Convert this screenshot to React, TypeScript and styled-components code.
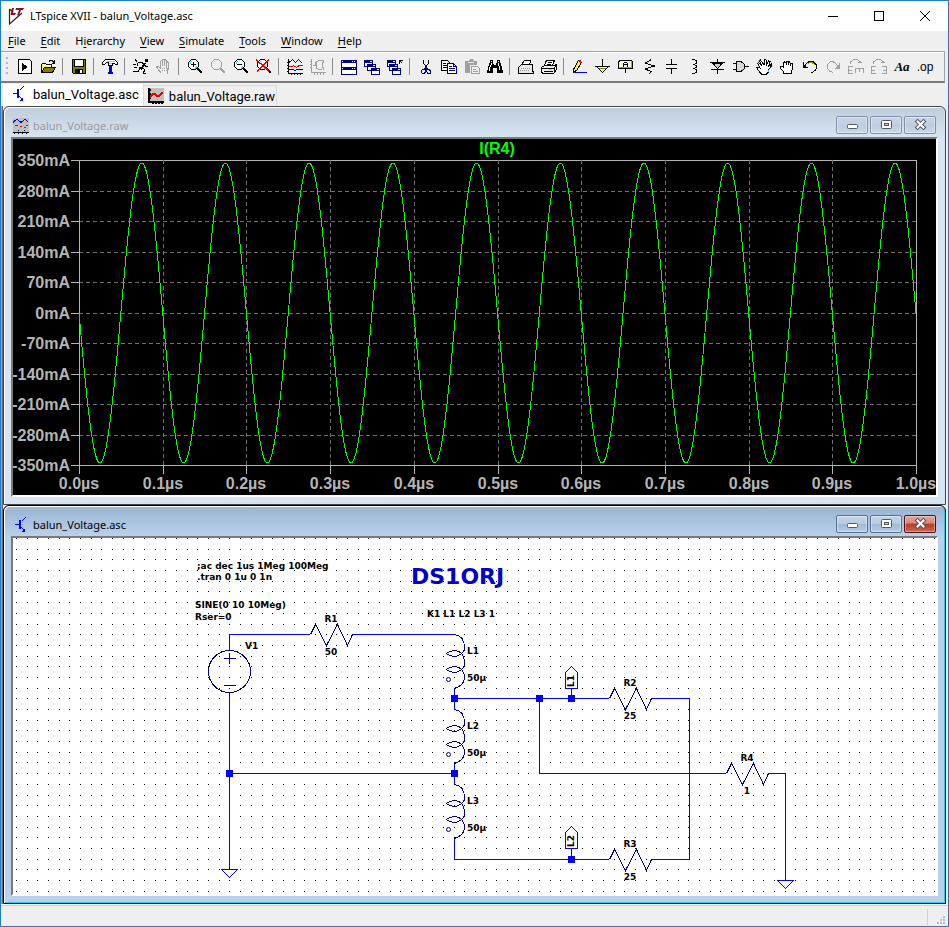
import React from "react";
import styled, { createGlobalStyle, css } from "styled-components";

const GlobalStyle = createGlobalStyle`
  * { box-sizing: border-box; }
  body { margin: 0; background: #f0f0f0; font-family: "Noto Sans", sans-serif; font-size: 11px; color: #000; }
  button { margin: 0; padding: 0; border: 0; background: none; font: inherit; color: inherit; }
`;

/* ---------- Main frame ---------- */

const Frame = styled.div`
  display: flex;
  flex-direction: column;
  min-height: 100vh;
  border: 1px solid #1a7fd4;
  background: #efefef;
`;

const TitleBar = styled.header`
  display: flex;
  align-items: center;
  height: 30px;
  padding-left: 7px;
  background: #fff;
`;

const AppTitle = styled.h1`
  flex: 1;
  margin: 0 0 0 5px;
  font-size: 11px;
  font-weight: 400;
  line-height: 16px;
`;

const CaptionButton = styled.button`
  display: flex;
  align-items: center;
  justify-content: center;
  width: 46px;
  height: 30px;
`;

const MenuBar = styled.nav`
  display: flex;
  align-items: center;
  gap: 1px;
  height: 20px;
`;

const MenuItem = styled.button`
  padding: 0 7px;
  line-height: 20px;
  u { text-underline-offset: 2px; }
`;

const ToolBar = styled.div`
  display: flex;
  align-items: center;
  height: 32px;
  margin-right: 3px;
  border-top: 1px solid #a0a0a0;
  border-bottom: 2px solid #7c7c7c;
  border-right: 1px solid #a0a0a0;
  box-shadow: inset 0 1px 0 #fff;
`;

const Grip = styled.span`
  flex: none;
  width: 2px;
  height: 20px;
  margin: 0 5px;
  background: repeating-linear-gradient(#b8b8b8 0 2px, #efefef 2px 5px);
`;

const ToolButton = styled.button`
  flex: none;
  width: 23px;
  height: 24px;
  padding: 0 3px 0 4px;
  svg { display: block; }
`;

const Separator = styled.span`
  flex: none;
  width: 8px;
  height: 17px;
  background: linear-gradient(#8c8c8c, #8c8c8c) 3px 0 / 1px 100% no-repeat;
`;

const Tabs = styled.div`
  display: flex;
  align-items: flex-start;
  height: 23px;
  padding-left: 2px;
`;

const Tab = styled.button<{ $active?: boolean }>`
  display: flex;
  align-items: center;
  font-family: Roboto, sans-serif;
  font-size: 13px;
  ${(p) =>
    p.$active
      ? css`
          gap: 6px;
          height: 22px;
          margin-top: 1px;
          padding: 0 4px 2px 8px;
          background: #fff;
          border-right: 1px solid #dcdcdc;
        `
      : css`
          gap: 5px;
          height: 21px;
          margin-top: 2px;
          padding: 0 1px 0 4px;
          border-top: 1px solid #dcdcdc;
          border-right: 1px solid #dcdcdc;
        `}
`;

/* ---------- Child windows ---------- */

const Workspace = styled.main`
  display: flex;
  flex: 1;
  flex-direction: column;
  padding: 0 2px 0 1px;
  border-left: 1px solid #a0a0a0;
  box-shadow: inset 1px 0 0 #696969;
`;

const ChildWindow = styled.section<{ $active?: boolean }>`
  display: flex;
  flex-direction: column;
  padding: 0 7px 7px;
  border: 1px solid ${(p) => (p.$active ? "#000" : "#464646")};
  border-radius: 6px 6px 0 0;
  background: ${(p) =>
    p.$active
      ? "linear-gradient(#99b4d1, #b9d1ea 30px)"
      : "linear-gradient(#bfcddb, #d7e4f2 30px)"};
  box-shadow: inset 1px 1px 0 #fff, inset -1px -1px 0 ${(p) => (p.$active ? "#1ad0f0" : "#d7e4f2")};
`;

const ChildTitle = styled.h2<{ $active?: boolean }>`
  display: flex;
  align-items: center;
  gap: 4px;
  height: 30px;
  margin: 0;
  padding: 7px 0 0 2px;
  font-size: 11px;
  font-weight: 400;
  line-height: 16px;
  color: ${(p) => (p.$active ? "#000" : "#9a9a9a")};
`;

const ChildName = styled.span`
  flex: 1;
`;

const ChildControls = styled.span`
  display: flex;
  gap: 2px;
  margin-right: 2px;
`;

const ChildButton = styled.button<{ $tone: "idle" | "active" | "close" }>`
  display: flex;
  align-items: center;
  justify-content: center;
  width: 32px;
  height: 18px;
  margin-bottom: 2px;
  border-radius: 2px;
  ${(p) =>
    p.$tone === "close"
      ? css`
          border: 1px solid #43141a;
          background: linear-gradient(#e5a598, #d98778 45%, #b93a25 50%, #cc6a4c);
          box-shadow: inset 0 0 0 1px rgba(255, 255, 255, 0.35);
        `
      : css`
          border: 1px solid ${p.$tone === "idle" ? "#8391ad" : "#5c6f8c"};
          background: ${p.$tone === "idle"
            ? "linear-gradient(#c9d5e5, #c2cee0 50%, #bccbe0 50%, #c9d8ea)"
            : "linear-gradient(#c4d6ea, #b5c9e0 50%, #9fb8d4 50%, #b5cee6)"};
          box-shadow: inset 0 0 0 1px rgba(255, 255, 255, 0.4);
        `}
`;

const Client = styled.div<{ $dark?: boolean }>`
  border: 2px solid;
  border-color: #7a7a7a #fff #fff #7a7a7a;
  background: ${(p) => (p.$dark ? "#000" : "#fff")};
  svg { display: block; width: 100%; height: auto; }
`;

const StatusBar = styled.footer`
  display: flex;
  align-items: flex-end;
  justify-content: flex-end;
  height: 22px;
  border-top: 1px solid #fff;
  box-shadow: inset 0 1px 0 #d0d0d0;
  padding: 0 2px 1px 0;
`;

const StatusDivider = styled.span`
  width: 1px;
  height: 16px;
  margin-right: 9px;
  background: #cfcfcf;
`;

/* ---------- Icons ---------- */

const NAVY = "#000080";
const GRAY = "#a0a0a0";

function Icon({ children, size = 16 }: { children: React.ReactNode; size?: number }) {
  return (
    <svg width={size} height={size} viewBox="0 0 16 16" fill="none" stroke="#000" shapeRendering="crispEdges" aria-hidden="true">
      {children}
    </svg>
  );
}

function Lens({ color = "#000", children }: { color?: string; children?: React.ReactNode }) {
  return (
    <Icon>
      <path d="M4.5 .5H8.5L11.5 3.5V7.5L8.5 10.5H4.5L1.5 7.5V3.5z" stroke={color} fill={color === "#000" ? "#fff" : "none"} />
      {color === "#000" && <path d="M3.5 5V3.5L5 2.5M8 9.5L9.5 8V7" stroke="#30d8d8" />}
      <path d="M10.5 9.5L15 14" stroke={color} strokeWidth="2.4" />
      {children}
    </Icon>
  );
}

const MiniWindow = ({ x, y }: { x: number; y: number }) => (
  <g>
    <path d={`M${x} ${y}h9v7h-9z`} fill={NAVY} stroke="none" />
    <path d={`M${x + 1} ${y + 3}h7v3h-7z`} fill="#fff" stroke="none" />
    <path d={`M${x + 6} ${y + 1.5}h2`} stroke="#fff" />
  </g>
);

const icons: Record<string, React.ReactNode> = {
  run: (
    <Icon>
      <path d="M1.5 .5H12.5L14.5 2.5V14.5H1.5z" fill="#fff" />
      <path d="M5 4V12L11 8z" fill="#000" stroke="none" />
    </Icon>
  ),
  open: (
    <Icon>
      <path d="M1.5 13.5V5.5L2.5 4.5H5.5L6.5 5.5H11.5V8" fill="#ffff80" />
      <path d="M1.5 13.5L4.5 8.5H15.5L12.5 13.5z" fill="#808000" />
      <path d="M9 2.5L10 1.5H12L14.5 4M14.5 1V4.5M12 4.5H15" />
    </Icon>
  ),
  save: (
    <Icon>
      <path d="M1.5 .5H14.5V14.5H2.5L1.5 13.5z" fill="#808000" />
      <path d="M4 1H12V7H4z" fill="#fff" stroke="none" />
      <path d="M3.5 1V7.5H12.5V1" />
      <path d="M4 10H12V15H4z" fill="#000" stroke="none" />
      <path d="M9 11H11V14H9z" fill="#fff" stroke="none" />
    </Icon>
  ),
  hammer: (
    <Icon>
      <path d="M1.5 2.5L3.5 .5H12.5L15.5 3.5V5.5H13.5L12.5 4.5H10.5V6.5H6.5V3.5L4 4L2.5 5.5H.5V3.5z" fill="#fff" />
      <path d="M5 2.5H13M7 4.5H10" stroke="#c0c0c0" />
      <path d="M7 7H10V15H7z" fill="#0000e0" stroke="none" />
      <path d="M6 13H11V15H6z" fill="#0000e0" stroke="none" />
    </Icon>
  ),
  runner: (
    <Icon>
      <path d="M12 0H15V3H12z" fill="#000" stroke="none" />
      <path d="M9 4L11.5 5L8.5 9.5L6.5 8.5" strokeWidth="2" />
      <path d="M5 3.5H10M11.5 5.5L13 7.5H15M9 9L11.5 10.5L10.5 14.5M7 9.5L5 12.5H0M10 14.5H13M5 4L4 6.5M2 .5L4 2.5M0 5.5H3M1 8.5H4" />
    </Icon>
  ),
  halt: (
    <Icon>
      <path
        d="M5.5 14.5L1.5 9.5L.5 7.5L2.5 7.5L4.5 9V2.5L5.5 1.5L6.5 2.5V7M6.5 2V1L7.5 .5L8.5 1V7M8.5 2L9.5 1L10.5 2V7M10.5 3.5L11.5 3L12.5 4V10L11.5 12.5V14.5z"
        stroke={GRAY}
      />
      <path d="M6 9H12M6 11H12" stroke={GRAY} strokeDasharray="1 1" />
    </Icon>
  ),
  zoomIn: (
    <Lens>
      <path d="M4 5.5H9M6.5 3V8" strokeWidth="1" />
    </Lens>
  ),
  zoomBack: <Lens color={GRAY} />,
  zoomOut: (
    <Lens>
      <path d="M4 5.5H9" />
    </Lens>
  ),
  zoomFit: (
    <Lens>
      <path d="M0 .5L13.5 12.5M13.5 .5L1 12.5" stroke="#e00000" strokeWidth="1.4" />
    </Lens>
  ),
  plots: (
    <Icon>
      <path d="M1.5 0V14.5H16M0 3.5H1M0 6.5H1M0 9.5H1M0 12.5H1M4.5 16V14M7.5 16V14M10.5 16V14M13.5 16V14" />
      <path d="M2 3.5L5.5 .5L8.5 3.5L11.5 .5L15.5 4.5" stroke="#0000c0" />
      <path d="M2 7.5H5L6.5 6.5L9.5 8.5L12 6.5H16" stroke="#e00000" />
      <path d="M2 10.5H6L8 11.5L10 10.5H16" stroke={NAVY} />
    </Icon>
  ),
  plotPick: (
    <Icon>
      <path d="M1.5 0V13.5H16M0 2.5H1M0 5.5H1M0 8.5H1M4.5 16V14M7.5 16V14M10.5 16V14M13.5 16V14M3 6.5H5L6 3.5L8.5 1.5H14M13.5 1V3L12.5 4V8L13.5 9V11M6.5 4V9L9 10.5H12" stroke={GRAY} />
    </Icon>
  ),
  tile: (
    <Icon>
      <path d="M0 1H16V16H0z" fill={NAVY} stroke="none" />
      <path d="M1 4H15V8H1zM1 11H15V15H1z" fill="#fff" stroke="none" />
      <path d="M1 2.5H2M11 2.5H12M13 2.5H14M1 9.5H2M11 9.5H12M13 9.5H14" stroke="#fff" />
    </Icon>
  ),
  cascade: (
    <Icon>
      <MiniWindow x={0} y={1} />
      <MiniWindow x={3} y={5} />
      <MiniWindow x={7} y={9} />
    </Icon>
  ),
  closeAll: (
    <Icon>
      <MiniWindow x={0} y={1} />
      <MiniWindow x={2} y={5} />
      <MiniWindow x={5} y={9} />
      <path d="M12.5 5V1.5H16M12.5 1.5L15.5 4.5" />
    </Icon>
  ),
  cut: (
    <Icon>
      <path d="M5.5 1V4L9 9M10.5 1V4L7 9" />
      <path d="M4.5 10.5H6L7.5 9V12.5L6.5 14.5H4.5L3.5 13.5V11.5zM8.5 9L10 10.5H11L12.5 12V14L11.5 14.5H10L8.5 12.5z" stroke={NAVY} />
    </Icon>
  ),
  copy: (
    <Icon>
      <path d="M.5 1.5H6.5L8.5 3.5V11.5H.5z" fill="#fff" />
      <path d="M2 4.5H5M2 6.5H6M2 8.5H6" />
      <path d="M6.5 4.5H12.5L15.5 7.5V14.5H6.5z" fill="#fff" stroke={NAVY} />
      <path d="M8 7.5H11M8 9.5H14M8 11.5H14M12.5 5V7.5H15" stroke={NAVY} />
    </Icon>
  ),
  paste: (
    <Icon>
      <path d="M1 2H4L6 0H8L10 2H13V6H6V14H1z" fill={GRAY} stroke="none" />
      <path d="M4 3.5H10" stroke="#e8e8e8" />
      <path d="M7.5 7.5H13.5L15.5 9.5V14.5H7.5z" stroke={GRAY} />
      <path d="M9 10.5H12M9 12.5H14" stroke={GRAY} />
    </Icon>
  ),
  find: (
    <Icon>
      <path d="M3 1H6V3L7 6H9L10 3V1H13V3L15 8L16 14H10V9H6V14H0L1 8L3 3z" fill="#000" stroke="none" />
      <path d="M4.5 4V5L2.5 9V12M11.5 4V5L12.5 9V11M4 2.5H5M11 2.5H12" stroke="#fff" />
    </Icon>
  ),
  preview: (
    <Icon>
      <path d="M4.5 6V4L6.5 1.5H12.5L11.5 6" fill="#fff" />
      <path d="M.5 8.5L3.5 5.5H14.5V12.5H15.5V14.5H.5z" fill="#e8e8e8" />
      <path d="M3 9.5H13M2 11.5H12" stroke="#999" strokeDasharray="1 1" />
    </Icon>
  ),
  print: (
    <Icon>
      <path d="M3.5 6L5.5 1.5H13.5L11.5 6" fill="#fff" />
      <path d="M.5 8.5L3.5 6.5H13.5L15.5 5.5V10.5L12.5 14.5H1.5L.5 12.5z" fill="#f0f0f0" />
      <path d="M1 9.5H12.5L15 7M3 12.5H12M7 3.5H11M6 5.5H10M13 9L13.5 13" />
      <path d="M8 10.5H11" stroke="#d8d800" />
    </Icon>
  ),
  wire: (
    <Icon>
      <path d="M1.5 13V10.5L6.5 1.5L9.5 3.5L4.5 11.5z" fill="#ffff00" />
      <path d="M7 1.5L9 3" stroke="#e00000" strokeWidth="2" />
      <path d="M1 12L3 13" strokeWidth="2" />
      <path d="M2 13.5H15" stroke="#0000ff" />
    </Icon>
  ),
  ground: (
    <Icon>
      <path d="M7.5 0V8M0 7.5H15" />
      <path d="M2 8L7.5 13.5L13 8" fill="#fff" stroke="#000" />
      <path d="M4 9.5H11" stroke="#808000" />
    </Icon>
  ),
  label: (
    <Icon>
      <path d="M2.5 1.5H13.5L14.5 2.5V9.5H.5V2.5z" fill="#ffffd8" />
      <path d="M13.5 2V9M1 8.5H14" stroke="#b0b000" />
      <path d="M7.5 10V14M5.5 8V4.5L6.5 3.5H8.5L9.5 4.5V8M6 5.5H9" />
    </Icon>
  ),
  resistor: (
    <Icon>
      <path d="M9.5 0V1.5L4 4L13.5 7L4 10L10 12.5L8.5 15" />
    </Icon>
  ),
  capacitor: (
    <Icon>
      <path d="M7.5 0V6M2 5.5H13M2 9.5H13M7.5 10V15" />
    </Icon>
  ),
  inductor: (
    <Icon>
      <path d="M5 .5H7.5L9.5 2V4L7.5 5.5H6M7.5 5.5L9.5 7V8L7.5 9.5H6M7.5 9.5L9.5 11V13L7.5 14.5H5" />
    </Icon>
  ),
  diode: (
    <Icon>
      <path d="M0 3.5H15M7.5 0V3M7.5 10V15M1 10.5H14" />
      <path d="M2.5 4L7.5 9.5L12.5 4z" fill="#d0d0d0" />
    </Icon>
  ),
  gate: (
    <Icon>
      <path d="M3.5 2.5H8L11.5 5.5V9.5L8 12.5H3.5z" fill="#d8d8d8" />
      <path d="M0 4.5H3M0 10.5H3M12 7.5H16" />
    </Icon>
  ),
  move: (
    <Icon>
      <path
        d="M5.5 15L1.5 10.5L.5 8L2.5 8L4.5 9.5L1.5 4.5L2.5 3.5L6 7L3.5 2L4.5 1L8 6L8.5 1L10 .5L10.5 6L12.5 2L14 2.5L12.5 7.5L15 5.5V7.5L12.5 11V13L10.5 15z"
        fill="#fff"
      />
      <path d="M12 10.5V13" stroke="#20d8e8" />
    </Icon>
  ),
  drag: (
    <Icon>
      <path
        d="M4.5 14.5V12.5L1.5 9.5V7.5H3.5L4.5 8V4L5.5 3L7 4V2.5L8 2L9.5 3V2.5L10.5 3L11.5 4.5H13L13.5 6V9.5L12.5 12V14.5z"
        fill="#fff"
      />
      <path d="M7.5 4V6M9.5 4V6M11.5 5V7" />
    </Icon>
  ),
  undo: (
    <Icon>
      <path d="M1.5 3V8.5H6M2 8L4.5 4.5L7 2.5H11L14.5 6V9L12.5 12.5L9 14" />
      <path d="M6 4.5L7.5 3.5H10L13 6" stroke="#a0a000" />
      <path d="M1 4V9H5z" fill="#000" stroke="none" />
    </Icon>
  ),
  redo: (
    <Icon>
      <path d="M14.5 4V9.5H10M14 8.5L10.5 4.5L8 2.5H5.5L2.5 5.5V9L4.5 12L8 13.5" stroke={GRAY} />
      <path d="M14 5V9H10z" fill={GRAY} stroke="none" />
    </Icon>
  ),
  rotate: (
    <Icon>
      <path d="M2.5 5V3L5.5 .5H9.5L12.5 3V4M10 3.5H14M5 7.5H.5V14.5H5M1 11.5H4M7.5 14V9.5H15.5V14M11.5 10V13" stroke={GRAY} />
    </Icon>
  ),
  mirror: (
    <Icon>
      <path d="M2.5 5V3L5.5 .5H9.5L12.5 3V4M10 3.5H14M5 7.5H.5V14.5H5M1 11.5H4M11 7.5H15.5V14.5H11M12 11.5H15" stroke={GRAY} />
    </Icon>
  ),
};

const Glyph = styled.span<{ $kind: "text" | "op" }>`
  display: block;
  width: 18px;
  margin-left: -1px;
  line-height: 18px;
  text-align: center;
  white-space: nowrap;
  ${(p) =>
    p.$kind === "text"
      ? css`
          font: italic 700 13px/18px "Liberation Serif", serif;
        `
      : css`
          font: 400 12px/16px "Liberation Sans", sans-serif;
        `}
`;

const toolGroups: [string, string][][] = [
  [["run", "Run"], ["open", "Open"]],
  [["save", "Save"]],
  [["hammer", "Control Panel"]],
  [["runner", "Run simulation"], ["halt", "Halt"]],
  [["zoomIn", "Zoom in"], ["zoomBack", "Zoom back"], ["zoomOut", "Zoom out"], ["zoomFit", "Zoom to fit"]],
  [["plots", "Autorange"], ["plotPick", "Pick visible traces"]],
  [["tile", "Tile windows"], ["cascade", "Cascade windows"], ["closeAll", "Close all windows"]],
  [["cut", "Cut"], ["copy", "Copy"], ["paste", "Paste"], ["find", "Find"]],
  [["preview", "Print setup"], ["print", "Print"]],
  [
    ["wire", "Wire"], ["ground", "Ground"], ["label", "Label net"], ["resistor", "Resistor"],
    ["capacitor", "Capacitor"], ["inductor", "Inductor"], ["diode", "Diode"], ["gate", "Component"],
    ["move", "Move"], ["drag", "Drag"], ["undo", "Undo"], ["redo", "Redo"], ["rotate", "Rotate"],
    ["mirror", "Mirror"], ["text", "Text"], ["op", "SPICE directive"],
  ],
];

function ToolIcon({ name }: { name: string }) {
  if (name === "text") return <Glyph $kind="text">Aa</Glyph>;
  if (name === "op") return <Glyph $kind="op">.op</Glyph>;
  return <>{icons[name]}</>;
}

const SchematicIcon = () => (
  <Icon>
    <path d="M2 7.5H7M12.5 .5L8.5 4.5M8.5 10.5L12.5 14.5" stroke="#0000ff" />
    <path d="M6 3H8V12H6z" fill="#0000ff" stroke="none" />
    <path d="M12 11V15H9z" fill="#0000ff" stroke="none" />
  </Icon>
);

const RawTabIcon = () => (
  <Icon>
    <path d="M0 0H16V14H0z" fill="#c0c0c0" stroke="none" />
    <path d="M1 0V15M0 14H16M0 1.5H3M0 5.5H3M0 9.5H3M4.5 16V13M7.5 16V13M10.5 16V13M13.5 16V13" strokeWidth="2" />
    <path d="M2 9L6 5.5L10 8.5L15 4.5" stroke="#f00000" strokeWidth="2" />
  </Icon>
);

const RawWindowIcon = () => (
  <Icon>
    <path d="M0 0H16V14H0z" fill="#c0c0c0" stroke="none" />
    <path d="M0 4.5L4 1L8 4.5L12 1L15.5 4.5" stroke="#0000e0" />
    <path d="M2 7.5H5M7 8.5H9M11 9.5H13M13 7.5H15" stroke="#f00000" />
    <path d="M0 14.5H16M1.5 14V16M5.5 14V16M9.5 14V16M13.5 14V16" />
    <path d="M5 12.5H6M11 12.5H12" stroke={NAVY} />
  </Icon>
);

/* ---------- Waveform plot ---------- */

const PLOT = { left: 66, top: 21, width: 837, height: 305 };
const yLabels = ["350mA", "280mA", "210mA", "140mA", "70mA", "0mA", "-70mA", "-140mA", "-210mA", "-280mA", "-350mA"];
const xLabels = Array.from({ length: 11 }, (_, i) => `${(i / 10).toFixed(1)}µs`);

const PlotText = styled.text`
  font: 700 16px "Liberation Sans", Arial, sans-serif;
`;

function WaveformPlot() {
  const { left, top, width, height } = PLOT;
  const points = Array.from({ length: width + 1 }, (_, px) => {
    const phase = (px / width) * 10 * 2 * Math.PI;
    return `${left + px},${(top + height / 2 + Math.sin(phase) * 150 + 0.5).toFixed(1)}`;
  }).join(" ");
  const right = left + width;
  const bottom = top + height;
  return (
    <svg viewBox="0 0 923 356" role="img" aria-label="Current through R4 over time">
      <g shapeRendering="crispEdges" fill="none" strokeWidth="1">
        {yLabels.map((label, i) => {
          const y = Math.ceil(top + i * 30.5) + 0.5;
          const edge = i === 0 || i === 10;
          return (
            <g key={label}>
              <path d={`M${left - 8} ${y}H${left}`} stroke="#b4b4b4" />
              <path d={`M${left} ${y}H${right}`} stroke={edge ? "#b4b4b4" : "#6e6e6e"} strokeDasharray={edge ? undefined : "4 3"} />
            </g>
          );
        })}
        {xLabels.map((label, i) => {
          const x = Math.round(left + i * 83.7) + 0.5;
          const edge = i === 0 || i === 10;
          return (
            <g key={label}>
              <path d={`M${x} ${bottom}V${bottom + 9}`} stroke="#b4b4b4" />
              <path d={`M${x} ${top}V${bottom}`} stroke={edge ? "#b4b4b4" : "#6e6e6e"} strokeDasharray={edge ? undefined : "4 3"} />
            </g>
          );
        })}
        <polyline points={points} stroke="#00ff00" />
      </g>
      <g fill="#b4b4b4">
        {yLabels.map((label, i) => (
          <PlotText key={label} x={57} y={Math.ceil(27 + i * 30.5)} textAnchor="end">
            {label}
          </PlotText>
        ))}
        {xLabels.map((label, i) => (
          <PlotText key={label} x={Math.round(left + i * 83.7)} y={350} textAnchor="middle">
            {label}
          </PlotText>
        ))}
      </g>
      <PlotText x={484} y={15} textAnchor="middle" fill="#00ff00">
        I(R4)
      </PlotText>
    </svg>
  );
}

/* ---------- Schematic ---------- */

const Label = styled.text`
  font: 700 9px "DejaVu Sans", Verdana, sans-serif;
`;

const CallSign = styled.text`
  font: 700 22px "DejaVu Sans", Verdana, sans-serif;
`;

const Resistor = ({ x, y, name, value }: { x: number; y: number; name: string; value: string }) => (
  <g>
    <path d={`M${x + 0.5} ${y + 0.5}l5 -10l11 21l11 -21l10 21l5 -11`} fill="none" stroke={NAVY} shapeRendering="crispEdges" />
    <Label x={x + 21} y={y - 12} textAnchor="middle">{name}</Label>
    <Label x={x + 21} y={y + 21} textAnchor="middle">{value}</Label>
  </g>
);

const Inductor = ({ y, name }: { y: number; name: string }) => (
  <g>
    <g transform={`translate(441.5 ${y + 0.5})`} fill="none" stroke={NAVY}>
      <path
        d="M0 0C6 1 10 5 10 13C10 17 9 18 7 19C3 23 -3 23 -8 19C-3 15 3 15 7 19C9 21 10 24 10 29C10 32 9 34 7 35C3 39 -3 39 -8 35C-3 31 3 31 7 35C9 37 10 40 10 44C9 51 4 52 0 54"
        shapeRendering="crispEdges"
      />
      <circle cx="-6" cy="45" r="2" />
    </g>
    <Label x={454} y={y + 20}>{name}</Label>
    <Label x={454} y={y + 47}>50µ</Label>
  </g>
);

const NetFlag = ({ y, name }: { y: number; name: string }) => (
  <g>
    <path d={`M558.5 ${y + 0.5}v-11h-6v-16l6 -6l6 6v16h-6`} fill="#fff" stroke="#0000ff" shapeRendering="crispEdges" />
    <Label transform={`translate(561 ${y - 12}) rotate(-90)`}>{name}</Label>
  </g>
);

const gridColumns = Array.from({ length: 87 }, (_, i) => 3 + Math.round(i * 10.674));
const gridRows = Array.from({ length: 34 }, (_, i) => Math.round(i * 10.69));
const gridPath = gridRows.map((y) => gridColumns.map((x) => `M${x} ${y}h1v1h-1z`).join("")).join("");

const junctions: [number, number][] = [[441, 160], [526, 160], [558, 160], [441, 235], [216, 235], [558, 321]];

function Schematic() {
  return (
    <svg viewBox="0 0 923 356" role="img" aria-label="Balun schematic">
      <path d={gridPath} fill="#000" shapeRendering="crispEdges" />
      <g fill="none" stroke="#0000ff" shapeRendering="crispEdges">
        <path d="M216.5 112V96.5H297M340 96.5H441M216.5 154V331M216 235.5H441" />
        <path d="M441.5 151V171M441.5 225V246M441.5 300V321.5H596M441 160.5H596" />
        <path d="M526.5 160V235.5H713M639 160.5H676.5V321.5H639M756 235.5H772.5V342" />
        <path d="M208.5 331.5H224.5L216.5 339.5zM764.5 342.5H780.5L772.5 350.5z" />
      </g>
      <g fill="none" stroke={NAVY} shapeRendering="crispEdges">
        <circle cx="216.5" cy="133.5" r="21" />
        <path d="M211 120.5H223M216.5 115V126M211 147.5H223" />
      </g>
      <Inductor y={96} name="L1" />
      <Inductor y={171} name="L2" />
      <Inductor y={246} name="L3" />
      <Resistor x={297} y={96} name="R1" value="50" />
      <Resistor x={596} y={160} name="R2" value="25" />
      <Resistor x={596} y={321} name="R3" value="25" />
      <Resistor x={713} y={235} name="R4" value="1" />
      <NetFlag y={161} name="L1" />
      <NetFlag y={321} name="L2" />
      {junctions.map(([x, y]) => (
        <rect key={`${x}-${y}`} x={x - 3} y={y - 3} width="7" height="7" fill="#0000ff" />
      ))}
      <Label x={232} y={111}>V1</Label>
      <Label x={184} y={31}>;ac dec 1us 1Meg 100Meg</Label>
      <Label x={184} y={42}>.tran 0 1u 0 1n</Label>
      <Label x={182} y={70}>SINE(0 10 10Meg)</Label>
      <Label x={182} y={82}>Rser=0</Label>
      <Label x={414} y={79}>K1 L1 L2 L3 1</Label>
      <CallSign x={398} y={46} fill="#0000c8">DS1ORJ</CallSign>
    </svg>
  );
}

/* ---------- Page ---------- */

function WindowControls({ active }: { active?: boolean }) {
  const tone = active ? "active" : "idle";
  return (
    <ChildControls>
      <ChildButton $tone={tone} aria-label="Minimize">
        <svg width="13" height="11">
          <rect x="1.5" y="5.5" width="10" height="4" rx="1" fill="#fff" stroke="#50586c" />
        </svg>
      </ChildButton>
      <ChildButton $tone={tone} aria-label="Restore">
        <svg width="13" height="11">
          <rect x="1.5" y="1.5" width="10" height="8" rx="1" fill="#fff" stroke="#50586c" />
          <rect x="4.5" y="4.5" width="4" height="2" fill="#c0cfe2" stroke="#50586c" />
        </svg>
      </ChildButton>
      <ChildButton $tone={active ? "close" : tone} aria-label="Close">
        <svg width="13" height="11">
          <path d="M3.5 2.5L9.5 8.5M9.5 2.5L3.5 8.5" stroke="#50586c" strokeWidth="4" strokeLinecap="square" />
          <path d="M3.5 2.5L9.5 8.5M9.5 2.5L3.5 8.5" stroke="#fff" strokeWidth="2" strokeLinecap="square" />
        </svg>
      </ChildButton>
    </ChildControls>
  );
}

const menus = ["File", "Edit", "Hierarchy", "View", "Simulate", "Tools", "Window", "Help"];
const accessIndex: Record<string, number> = { Hierarchy: 1 };

export default function App() {
  return (
    <>
      <GlobalStyle />
      <Frame>
        <TitleBar>
          <svg width="17" height="17" viewBox="0 0 17 17" aria-hidden="true">
            <path d="M1.5 1L4.5 3.5M1.5 1V16L14 5" fill="none" stroke="#222" strokeWidth="1.2" />
            <path d="M4 0H6L5 5H8L7 7H2.5z" fill="#8a1020" />
            <path d="M8 0H16L15 2H13L11 7.5H9L11 2H7.5z" fill="#8a1020" />
          </svg>
          <AppTitle>LTspice XVII - balun_Voltage.asc</AppTitle>
          <CaptionButton aria-label="Minimize">
            <svg width="10" height="10" shapeRendering="crispEdges"><path d="M0 5.5H10" stroke="#000" /></svg>
          </CaptionButton>
          <CaptionButton aria-label="Maximize">
            <svg width="10" height="10" shapeRendering="crispEdges"><path d="M.5 .5H9.5V9.5H.5z" stroke="#000" fill="none" /></svg>
          </CaptionButton>
          <CaptionButton aria-label="Close">
            <svg width="10" height="10"><path d="M0 0L10 10M10 0L0 10" stroke="#000" /></svg>
          </CaptionButton>
        </TitleBar>
        <MenuBar aria-label="Main menu">
          {menus.map((name) => {
            const at = accessIndex[name] ?? 0;
            return (
              <MenuItem key={name}>
                {name.slice(0, at)}
                <u>{name[at]}</u>
                {name.slice(at + 1)}
              </MenuItem>
            );
          })}
        </MenuBar>
        <ToolBar role="toolbar" aria-label="Tools">
          <Grip />
          {toolGroups.map((group, i) => (
            <React.Fragment key={group[0][0]}>
              {i > 0 && <Separator />}
              {group.map(([name, title]) => (
                <ToolButton key={name} aria-label={title}>
                  <ToolIcon name={name} />
                </ToolButton>
              ))}
            </React.Fragment>
          ))}
        </ToolBar>
        <Tabs role="tablist">
          <Tab role="tab" aria-selected="true" $active>
            <SchematicIcon />
            balun_Voltage.asc
          </Tab>
          <Tab role="tab" aria-selected="false">
            <RawTabIcon />
            balun_Voltage.raw
          </Tab>
        </Tabs>
        <Workspace>
          <ChildWindow>
            <ChildTitle>
              <RawWindowIcon />
              <ChildName>balun_Voltage.raw</ChildName>
              <WindowControls />
            </ChildTitle>
            <Client $dark>
              <WaveformPlot />
            </Client>
          </ChildWindow>
          <ChildWindow $active>
            <ChildTitle $active>
              <SchematicIcon />
              <ChildName>balun_Voltage.asc</ChildName>
              <WindowControls active />
            </ChildTitle>
            <Client>
              <Schematic />
            </Client>
          </ChildWindow>
        </Workspace>
        <StatusBar>
          <StatusDivider />
          <svg width="9" height="9" fill="#bdbdbd" aria-hidden="true">
            <path d="M6 0h2v2h-2zM3 3h2v2h-2zM6 3h2v2h-2zM0 6h2v2h-2zM3 6h2v2h-2zM6 6h2v2h-2z" />
          </svg>
        </StatusBar>
      </Frame>
    </>
  );
}
